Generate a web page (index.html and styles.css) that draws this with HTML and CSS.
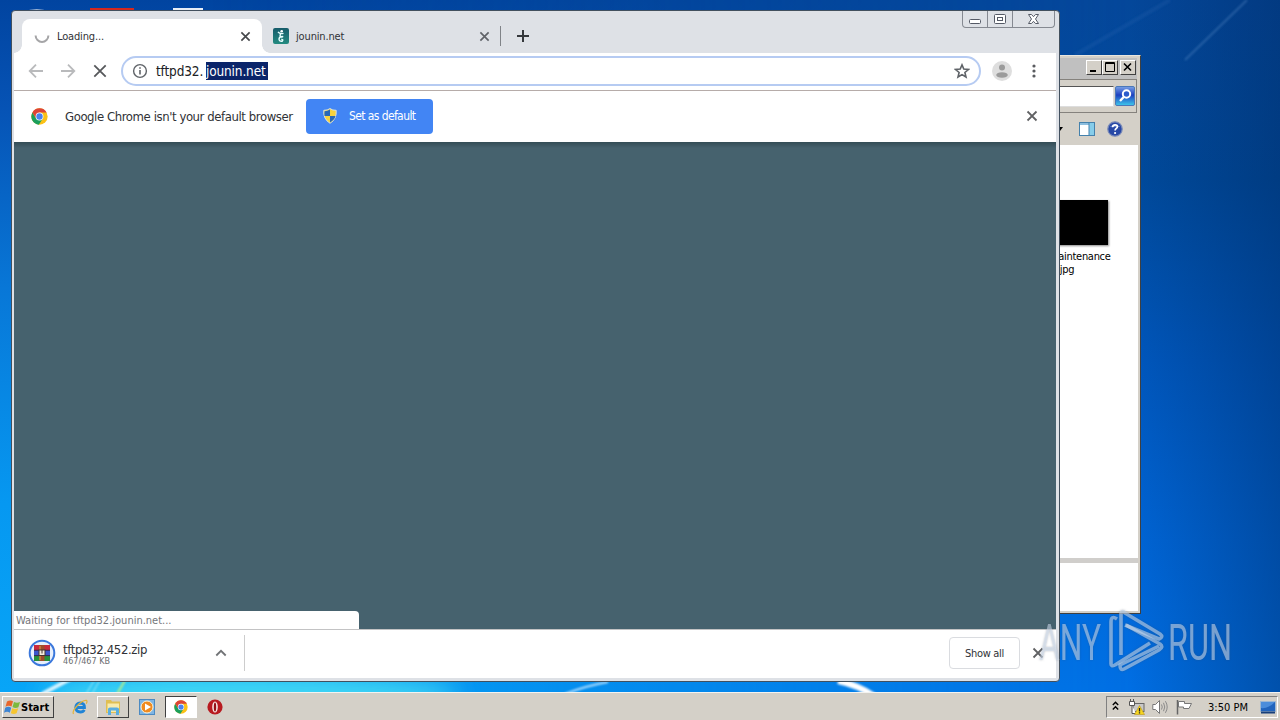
FILE: index.html
```html
<!DOCTYPE html>
<html lang="en">
  <head>
    <meta charset="UTF-8" />
    <meta name="viewport" content="width=device-width, initial-scale=1.0" />
    <title>Desktop</title>
    <link rel="stylesheet" href="styles.css">
  </head>
  <body>
    <svg width="0" height="0" class="defs">
      <symbol id="chrome" viewBox="0 0 48 48">
        <circle cx="24" cy="24" r="23" fill="#fbc116" />
        <path d="M4 12.5A23 23 0 0 0 22 47L33.5 29.5 24 24 14.5 29.5Z" fill="#1a9f5c" />
        <path d="M24 13H44.2A23 23 0 0 0 4 12.4L14.5 29.5Z" fill="#dc4437" />
        <circle cx="24" cy="24" r="11" fill="#fff" />
        <circle cx="24" cy="24" r="9" fill="#4a82ee" />
      </symbol>
      <symbol id="cross" viewBox="0 0 12 12">
        <path d="M1.5 1.5 10.5 10.5M10.5 1.5 1.5 10.5" fill="none" stroke="currentColor" stroke-width="1.8" />
      </symbol>
    </svg>

    <div class="desktop">
      <svg class="wallpaper" width="1280" height="720" viewBox="0 0 1280 720">
        <defs>
          <filter id="soft"><feGaussianBlur stdDeviation="1.1" /></filter>
          <filter id="haze" y="-2" height="5"><feGaussianBlur stdDeviation="12" /></filter>
        </defs>
        <ellipse cx="250" cy="695" rx="210" ry="22" fill="#4be0f4" opacity=".85" filter="url(#haze)" />
        <g filter="url(#soft)" fill="none">
          <path d="M42 694 72 678" stroke="#d5f3ff" stroke-width="4" />
          <path d="M86 694 97 676M92 694 101 678" stroke="#a8ecf5" />
          <path d="M117 694 127 677" stroke="#b9ef87" stroke-width="2" />
          <path d="M565 694Q585 686 608 682" stroke="#b5e0ff" stroke-width="2" />
          <path d="M838 681Q858 685 874 696" stroke="#fff" stroke-width="6" />
          <path d="M1185 60 1247 0" stroke="#6b9bd0" stroke-width="2" opacity=".35" />
          <path d="M1075 55 1170 0" stroke="#5c8fcc" stroke-width="4" opacity=".12" />
        </g>
        <path d="M23 12Q37 6 50 12Z" fill="#9bb2d3" />
        <rect x="90" y="8" width="44" height="5" fill="#d5281e" />
        <rect x="173" y="8" width="30" height="5" fill="#e9eef6" />
      </svg>

      <!-- Explorer window, behind the browser -->
      <div class="explorer">
        <div class="exp-title">
          <div class="exp-btn"><svg width="14" height="13"><path d="M3 10H9" stroke="#000" stroke-width="2" /></svg></div>
          <div class="exp-btn"><svg width="14" height="13"><path d="M2.5 1.5H11.5V10.5H2.5ZM2 2.5H12" fill="none" stroke="#000" /></svg></div>
          <div class="exp-btn exp-close"><svg width="14" height="13"><path d="M3 2.5 10 9.5M10 2.5 3 9.5" stroke="#000" stroke-width="1.6" /></svg></div>
        </div>
        <div class="exp-address">
          <div class="exp-input"></div>
          <svg class="exp-search" width="20" height="20" viewBox="0 0 20 20">
            <defs>
              <linearGradient id="sg" x2="0" y2="1"><stop offset="0" stop-color="#7aa2e6" /><stop offset=".45" stop-color="#1d3fc0" /><stop offset="1" stop-color="#3ec9ec" /></linearGradient>
            </defs>
            <rect x=".5" y=".5" width="19" height="19" rx="1.5" fill="url(#sg)" stroke="#4b78b8" />
            <circle cx="11.5" cy="8" r="3.7" fill="#2c5ccc" stroke="#fff" stroke-width="2" />
            <path d="M8.7 11 5 15" stroke="#fff" stroke-width="2.4" />
          </svg>
        </div>
        <div class="exp-tools">
          <svg width="6" height="5"><path d="M0 0H6L3 4Z" /></svg>
          <svg width="16" height="14" viewBox="0 0 16 14">
            <rect x=".5" y=".5" width="15" height="13" fill="#fff" stroke="#4581ac" />
            <path d="M1 2H10" stroke="#8dbede" stroke-width="2" />
            <rect x="10" y="1" width="5" height="12" fill="#86cdea" />
            <path d="M10 1V13" stroke="#4581ac" />
          </svg>
          <svg width="16" height="16" viewBox="0 0 16 16">
            <circle cx="8" cy="8" r="7.2" fill="#2748a6" stroke="#7889b8" stroke-width="1.2" />
            <path d="M2.5 6Q8 1 13.5 6Z" fill="#7e9bdc" opacity=".7" />
            <path d="M5.6 6.2C5.8 3 10.5 3.1 10.4 5.8 10.3 7.5 8.1 7.5 8.1 9.6" fill="none" stroke="#fff" stroke-width="1.7" />
            <circle cx="8.1" cy="12" r="1.1" fill="#fff" />
          </svg>
        </div>
        <div class="exp-files">
          <div class="thumb"></div>
          <div class="file-name">maintenance<div class="file-ext">.jpg</div></div>
        </div>
        <div class="exp-details"></div>
      </div>

      <!-- Browser window -->
      <div class="browser">
        <div class="tabstrip">
          <div class="tab active">
            <svg width="16" height="16"><path d="M1.6 7.5A6.4 6.4 0 0 0 14.4 7.5" fill="none" stroke="#a5a5a7" stroke-width="2" /></svg>
            <span class="tab-title">Loading...</span>
            <svg class="tab-close" width="11" height="11"><use href="#cross" /></svg>
          </div>
          <div class="tab">
            <svg width="16" height="16" viewBox="0 0 16 16">
              <defs><linearGradient id="jg" x2="0" y2="1"><stop offset="0" stop-color="#165b6a" /><stop offset="1" stop-color="#238b81" /></linearGradient></defs>
              <rect width="16" height="16" rx="2" fill="url(#jg)" />
              <circle cx="8.7" cy="3.3" r="1.3" fill="#fff" />
              <path d="M5 3.8Q6.5 6.2 10.5 5.4M7.5 6Q6 8.8 9.5 9.2M10.3 8.6Q6.3 8.2 6 11 6.3 13.8 9.2 13.2 10.8 11.6 8.3 11.2" fill="none" stroke="#e8ffff" stroke-width="1.4" />
            </svg>
            <span class="tab-title">jounin.net</span>
            <svg class="tab-close dim" width="11" height="11"><use href="#cross" /></svg>
          </div>
          <div class="tab-sep"></div>
          <svg class="new-tab" width="12" height="12"><path d="M6 0V12M0 6H12" stroke="#35383c" stroke-width="2" /></svg>
          <div class="caption">
            <div class="cap"><svg width="24" height="16"><rect x="6.5" y="8.5" width="11" height="4" rx="1" fill="#fff" stroke="#555a66" /></svg></div>
            <div class="cap"><svg width="24" height="16"><rect x="6.5" y="3.5" width="11" height="9" rx="1" fill="#fff" stroke="#555a66" /><rect x="9.5" y="6.5" width="5" height="3" fill="#fff" stroke="#555a66" /></svg></div>
            <div class="cap wide"><svg width="41" height="16"><path d="M15.5 3.5H18.5L20.5 5.7 22.5 3.5H25.5L22.5 8 25.5 12.5H22.5L20.5 10.3 18.5 12.5H15.5L18.5 8Z" fill="#fff" stroke="#555a66" /></svg></div>
          </div>
        </div>

        <div class="toolbar">
          <svg class="nav" width="16" height="16"><path d="M15 8H2M8 1.7 1.7 8 8 14.3" fill="none" stroke="#b9babc" stroke-width="1.8" /></svg>
          <svg class="nav" width="16" height="16"><path d="M1 8H14M8 1.7 14.3 8 8 14.3" fill="none" stroke="#b9babc" stroke-width="1.8" /></svg>
          <svg class="nav stop" width="14" height="14" viewBox="0 0 14 14"><path d="M1.3 1.3 12.7 12.7M12.7 1.3 1.3 12.7" stroke="#56585b" stroke-width="1.8" /></svg>
          <div class="omnibox">
            <svg width="16" height="16" viewBox="0 0 16 16"><circle cx="8" cy="8" r="6.4" fill="none" stroke="#5f6368" stroke-width="1.4" /><path d="M8 7V11.6M8 4.2V5.8" stroke="#5f6368" stroke-width="1.6" /></svg>
            <div class="url"><span class="host">tftpd32.</span><span class="selected">jounin.net</span></div>
            <svg class="star" width="16" height="16" viewBox="0 0 16 16"><path d="M8 1.9 9.8 6.1 14.4 6.5 10.9 9.5 12 14 8 11.6 4 14 5.1 9.5 1.6 6.5 6.2 6.1Z" fill="none" stroke="#5f6368" stroke-width="1.6" /></svg>
          </div>
          <svg class="avatar" width="20" height="20"><circle cx="10" cy="10" r="10" fill="#dedede" /><circle cx="10" cy="6.5" r="3" fill="#9b9b9b" /><ellipse cx="10" cy="14" rx="5.8" ry="2.8" fill="#9b9b9b" /></svg>
          <svg width="4" height="14" fill="#5a5c60"><circle cx="2" cy="2" r="1.6" /><circle cx="2" cy="7" r="1.6" /><circle cx="2" cy="12" r="1.6" /></svg>
        </div>

        <div class="infobar">
          <svg width="17" height="17"><use href="#chrome" /></svg>
          <span class="info-text">Google Chrome isn't your default browser</span>
          <button class="default-btn">
            <svg width="14" height="16" viewBox="0 0 14 16">
              <path d="M7 .6Q9.5 2.5 13.2 2.3 14 11 7 15.3 0 11 .8 2.3 4.5 2.5 7 .6Z" fill="#f7d23c" stroke="#d9e2df" />
              <path d="M7 1.6V8H1.5Q1.2 5 1.6 3.2 4.5 3.2 7 1.6ZM7 8H12.5Q11.5 12 7 14.4Z" fill="#2867b6" />
            </svg>
            <span>Set as default</span>
          </button>
          <svg class="info-close" width="12" height="12"><use href="#cross" /></svg>
        </div>

        <div class="page">
          <div class="status">Waiting for tftpd32.jounin.net...</div>
        </div>

        <div class="downloads">
          <svg width="28" height="28" viewBox="0 0 28 28">
            <circle cx="14" cy="14" r="12.3" fill="#e8f0fc" stroke="#3b78dc" stroke-width="2" />
            <rect x="6" y="6" width="16" height="5.3" fill="#c9293c" />
            <rect x="6" y="11.3" width="16" height="5.3" fill="#3a56cd" />
            <rect x="6" y="16.6" width="16" height="5.4" fill="#26913b" />
            <path d="M6 11.3H22M6 16.6H22" stroke="#33214e" />
            <rect x="11.5" y="6" width="5" height="16" fill="#a04c2a" />
            <path d="M12 7V21" stroke="#dca13c" />
            <rect x="11" y="11" width="6" height="5.5" fill="#f4eddb" stroke="#47352e" />
            <path d="M14 11V14.5" stroke="#47352e" />
          </svg>
          <div class="dl-info">
            <div class="dl-name">tftpd32.452.zip</div>
            <div class="dl-size">467/467 KB</div>
          </div>
          <svg class="dl-arrow" width="12" height="8"><path d="M1.3 6.5 6 1.8 10.7 6.5" fill="none" stroke="#717376" stroke-width="1.8" /></svg>
          <div class="dl-sep"></div>
          <button class="show-all">Show all</button>
          <svg class="dl-close" width="12" height="12"><use href="#cross" /></svg>
        </div>
      </div>

      <svg class="watermark" width="210" height="80" viewBox="0 0 210 80">
        <g fill="#d3e0f0" fill-opacity=".55">
          <text x="1" y="59.5" textLength="62" lengthAdjust="spacingAndGlyphs">ANY</text>
          <text x="130" y="59.5" textLength="64" lengthAdjust="spacingAndGlyphs">RUN</text>
        </g>
        <g fill="none" stroke="#c0d5ef" stroke-opacity=".6" stroke-width="3.6" stroke-linejoin="round">
          <path d="M79 19Q73 15 73 22V64Q73 67 77 65L112 43" />
          <path d="M83 55V13Q84 10 87 13L122 34Q126 37 121 39L87 25" />
          <path d="M88 25 122 44Q126 47 121 50L86 69Q82 71 82 65L121 46" />
        </g>
      </svg>

      <div class="taskbar">
        <div class="start">
          <svg width="17" height="16" viewBox="0 0 17 16">
            <path d="M3 2.5Q6 .5 9 2.3L7.5 7.6Q4.5 6 1.5 7.8Z" fill="#e8662b" />
            <path d="M10 3Q13 4.6 16 3L14.4 8.2Q11.5 9.7 8.5 8Z" fill="#7cb93e" />
            <path d="M1.2 8.8Q4.3 7 7.2 8.7L5.8 13.7Q3 12 0 13.8Z" fill="#3d85d3" />
            <path d="M8.2 9.2Q11 10.8 14.2 9.3L12.6 14.2Q9.8 15.8 6.8 14.2Z" fill="#f6c52e" />
          </svg>
          <span>Start</span>
        </div>
        <div class="task ie">
          <svg width="16" height="16" viewBox="0 0 16 16">
            <path d="M3.5 8.5H12.5Q12.7 4.2 8.3 4 4 4.2 3.7 8.7 4 13 8.4 13 11.2 13 12.3 10.8" fill="none" stroke="#2084d6" stroke-width="2.8" />
            <path d="M1.5 15Q0 12.5 4.5 7.5 10.5 1 14.4 1.4 15.7 2 14.3 4.8" fill="none" stroke="#e2b33c" stroke-width="1.2" />
          </svg>
        </div>
        <div class="task raised">
          <svg width="16" height="16" viewBox="0 0 16 16">
            <path d="M1 1H6L7 2.5H15V14H1Z" fill="#e0bf52" />
            <path d="M2.5 4.5H14V13H2.5Z" fill="#f8ebad" />
            <path d="M3 16V10Q3 8.5 5 8.5H12Q14 8.5 14 10V16H11V11.5H6V16Z" fill="#5aaee0" />
          </svg>
        </div>
        <div class="task">
          <svg width="16" height="16" viewBox="0 0 16 16">
            <rect x=".5" y=".5" width="15" height="15" fill="#7eb5e4" stroke="#4c8ac2" />
            <circle cx="8" cy="8" r="6" fill="#f08b20" stroke="#fff3d6" />
            <path d="M6 4.5 12 8 6 11.5Z" fill="#fff" />
          </svg>
        </div>
        <div class="task pressed"><svg width="14" height="14"><use href="#chrome" /></svg></div>
        <div class="task opera">
          <svg width="16" height="16"><circle cx="8" cy="8" r="7.6" fill="#b81a20" /><ellipse cx="8" cy="8" rx="2.8" ry="5.6" fill="#f8e9e6" /><ellipse cx="8" cy="8" rx="1.2" ry="4.6" fill="#951015" /></svg>
        </div>
        <div class="tray">
          <svg class="chevrons" width="7" height="10"><path d="M.8 4 3.5 1.3 6.2 4M.8 8.5 3.5 5.8 6.2 8.5" fill="none" stroke="#000" stroke-width="1.4" /></svg>
          <svg class="net" width="17" height="16" viewBox="0 0 17 16">
            <rect x="5" y="4.5" width="11" height="8" fill="#c8c8c8" stroke="#666" />
            <path d="M1.5 2.5H6.5V6.5H1.5ZM2.5 0V2.5M5.5 0V2.5M4 6.5V14.5H8" fill="#fff" stroke="#555" />
            <path d="M11.5 6.5 16.5 15.5H6.5Z" fill="#f6d51f" stroke="#b9951a" stroke-width=".6" />
            <path d="M11.5 9V12.5M11.5 13.3V14.6" stroke="#222" stroke-width="1.3" />
          </svg>
          <svg class="sound" width="17" height="16" viewBox="0 0 17 16">
            <path d="M.8 5.5H3.5L7.5 1.5V14.5L3.5 10.5H.8Z" fill="#fff" stroke="#777" />
            <path d="M9.5 5.5Q11 8 9.5 10.5M11.5 3.8Q14 8 11.5 12.2M13.4 2.2Q17 8 13.4 13.8" fill="none" stroke="#8b8b8b" />
          </svg>
          <svg class="flag" width="17" height="16" viewBox="0 0 17 16">
            <path d="M1.5 1V15.5" stroke="#666" stroke-width="1.5" />
            <path d="M2.5 2.5H8.5V4.5H15.5L13 9.5H7.5V8H2.5Z" fill="#fff" stroke="#777" />
          </svg>
          <span class="clock">3:50 PM</span>
          <svg width="16" height="13" viewBox="0 0 16 13">
            <rect x=".5" y=".5" width="15" height="10" fill="#2164bd" stroke="#9db7d2" />
            <path d="M1 7Q8 8 15 1V1H1Z" fill="#4b8ddb" />
            <path d="M1 11.5H15" stroke="#173e7a" stroke-width="2" />
          </svg>
        </div>
      </div>
    </div>
  </body>
</html>
```
FILE: styles.css
```css
* {
  box-sizing: border-box;
}

body {
  margin: 0;
  overflow: hidden;
  font-family: "DejaVu Sans Condensed", "DejaVu Sans", sans-serif;
  font-size: 11px;
  color: #303236;
}

svg {
  display: block;
  flex-shrink: 0;
}

button {
  font-family: inherit;
  padding: 0;
}

.defs {
  position: absolute;
}

.desktop {
  position: relative;
  width: 1280px;
  height: 720px;
  display: flex;
  flex-direction: column;
  justify-content: flex-end;
  background: linear-gradient(to bottom, #0144a0 0%, #0653b5 15%, #0877d7 40%, #0698f1 70%, #08a7f8 100%);
}

/* darker right half of the wallpaper */
.desktop::before {
  content: "";
  position: absolute;
  inset: 0;
  background:
    linear-gradient(to right, transparent 1130px, rgba(0, 40, 95, 0.42) 1280px),
    linear-gradient(to bottom, #04479a 0%, #004a9c 25%, #0057bd 50%, #0065d6 75%, #0070e6 100%);
  -webkit-mask-image: linear-gradient(to right, transparent 200px, #000 1130px);
  mask-image: linear-gradient(to right, transparent 200px, #000 1130px);
}

.wallpaper {
  position: absolute;
  left: 0;
  top: 0;
}

/* Explorer */
.explorer {
  position: absolute;
  left: 640px;
  top: 55px;
  width: 501px;
  height: 559px;
  display: flex;
  flex-direction: column;
  padding: 1px 2px 2px 1px;
  background: #d4d0c8;
  border: 1px solid #e8e6e0;
  border-right-color: #404040;
  border-bottom-color: #404040;
}

.exp-title {
  height: 21px;
  margin: 1px 1px 0;
  padding: 2px 1px 0;
  display: flex;
  justify-content: flex-end;
  background: #c0c0c0;
}

.exp-btn {
  width: 16px;
  height: 15px;
  background: #d4d0c8;
  border: 1px solid #fff;
  border-right-color: #404040;
  border-bottom-color: #404040;
}

.exp-close {
  margin-left: 2px;
}

.exp-address {
  height: 34px;
  margin-right: 1px;
  padding: 6px 1px 0 0;
  display: flex;
  gap: 1px;
  border: 1px solid #85827d;
}

.exp-input {
  flex: 1;
  height: 21px;
  background: #fff;
  border: 1px solid #555;
  border-right-color: #ddd;
  border-bottom-color: #ddd;
}

.exp-tools {
  height: 32px;
  padding-right: 15px;
  display: flex;
  align-items: center;
  justify-content: flex-end;
  gap: 12px;
}

.exp-tools svg:first-child {
  margin-right: 4px;
}

.exp-files {
  flex: 1;
  padding: 55px 22px 0 0;
  background: #fff;
  display: flex;
  flex-direction: column;
  align-items: flex-end;
}

.thumb {
  width: 80px;
  height: 45px;
  margin-right: 8px;
  background: #000;
  box-shadow: 1px 1px 2px #888;
}

.file-name {
  width: 67px;
  margin-top: 5px;
  line-height: 13px;
  letter-spacing: -0.3px;
  color: #000;
}

.file-ext {
  padding-left: 8px;
}

.exp-details {
  height: 53px;
  border-top: 5px solid #d0cecb;
  background: #fff;
}

/* Browser */
.browser {
  position: absolute;
  left: 11px;
  top: 10px;
  width: 1049px;
  height: 672px;
  display: flex;
  flex-direction: column;
  padding: 0 3px 3px 2px;
  background: #dee1e6;
  border: 1px solid #42505e;
  border-radius: 4px;
}

.tabstrip {
  height: 42px;
  padding: 8px 0 0 8px;
  display: flex;
  align-items: flex-start;
}

.tab {
  width: 239px;
  height: 34px;
  padding: 0 11px;
  display: flex;
  align-items: center;
  gap: 7px;
}

.tab.active {
  width: 240px;
  padding: 0 11px 0 12px;
  background: #fff;
  border-radius: 8px 8px 0 0;
  position: relative;
}

.tab.active::before,
.tab.active::after {
  content: "";
  position: absolute;
  bottom: 0;
  width: 8px;
  height: 8px;
}

.tab.active::before {
  left: -8px;
  background: radial-gradient(circle at 0 0, transparent 7.5px, #fff 8px);
}

.tab.active::after {
  right: -8px;
  background: radial-gradient(circle at 100% 0, transparent 7.5px, #fff 8px);
}

.tab-title {
  flex: 1;
  letter-spacing: -0.15px;
}

.tab-close {
  color: #46484b;
}

.tab-close.dim {
  color: #606368;
}

.tab-sep {
  width: 1px;
  height: 20px;
  margin: 7px 16px 0 -1px;
  background: #808388;
}

.new-tab {
  margin-top: 11px;
}

.caption {
  display: flex;
  margin: -8px 1px 0 auto;
  height: 17px;
  border: 1px solid #858991;
  border-top: none;
  border-radius: 0 0 4px 4px;
}

.cap + .cap {
  border-left: 1px solid #858991;
}

.toolbar {
  height: 38px;
  padding: 0 20px 1px 14px;
  display: flex;
  align-items: center;
  background: #fff;
  border-bottom: 1px solid #b6aca9;
}

.nav {
  margin-right: 16px;
}

.nav.stop {
  margin: 0 14px 0 1px;
}

.omnibox {
  width: 860px;
  height: 30px;
  padding: 0 9px;
  display: flex;
  align-items: center;
  border: 2px solid #b6cbf2;
  border-radius: 15px;
  color: #202124;
}

.url {
  flex: 1;
  display: flex;
  margin-left: 8px;
  font-size: 14px;
  line-height: 18px;
}

.host {
  width: 50px;
  letter-spacing: -0.15px;
}

.selected {
  width: 62px;
  background: #0a246a;
  color: #fff;
  letter-spacing: -0.15px;
}

.host,
.selected {
  font-size: 13.5px;
}

.avatar {
  margin: 0 20px 0 11px;
}

.infobar {
  height: 51px;
  padding: 0 18px 1px 17px;
  display: flex;
  align-items: center;
  background: #fff;
}

.info-text {
  width: 228px;
  margin: 0 13px 0 17px;
  font-size: 13px;
  letter-spacing: -0.42px;
  white-space: nowrap;
}

.default-btn {
  width: 127px;
  height: 35px;
  padding-left: 17px;
  display: flex;
  align-items: center;
  gap: 12px;
  border: none;
  border-radius: 4px;
  background: #4285f4;
  color: #fff;
  font-size: 12px;
  letter-spacing: -0.6px;
}

.info-close {
  margin-left: auto;
  color: #606163;
}

.page {
  flex: 1;
  display: flex;
  align-items: flex-end;
  background: linear-gradient(#344d56, #46626e 6px);
}

.status {
  width: 345px;
  height: 18px;
  padding-left: 2px;
  background: #fff;
  border-radius: 0 4px 0 0;
  color: #74767a;
  line-height: 19px;
}

.downloads {
  height: 49px;
  padding: 0 12px 2px 14px;
  display: flex;
  align-items: center;
  background: #fff;
  border-top: 1px solid #c3c3c4;
}

.dl-info {
  width: 152px;
  margin: 2px 0 0 7px;
}

.dl-name {
  font-size: 13px;
  line-height: 13px;
  letter-spacing: -0.35px;
}

.dl-size {
  color: #6b6d70;
  font-size: 9px;
  line-height: 10px;
}

.dl-sep {
  width: 1px;
  height: 36px;
  margin-left: 17px;
  background: #cdcdcd;
}

.show-all {
  width: 71px;
  height: 32px;
  margin: 0 12px 0 auto;
  background: #fff;
  border: 1px solid #dadce0;
  border-radius: 4px;
  color: #303236;
  font-size: 11px;
  letter-spacing: -0.3px;
}

.dl-close {
  color: #606163;
}

.watermark {
  position: absolute;
  left: 1038px;
  top: 600px;
  font-family: Roboto, sans-serif;
  font-size: 50px;
  font-weight: 400;
  filter: drop-shadow(0 0 1px rgba(60, 70, 85, 0.5));
}

/* Taskbar */
.taskbar {
  position: relative;
  height: 28px;
  padding: 3px 2px 2px;
  display: flex;
  align-items: flex-start;
  background: #d4d0c8;
  border-top: 1px solid #f4f3f0;
}

.start {
  width: 52px;
  height: 22px;
  padding-left: 1px;
  display: flex;
  align-items: center;
  margin-right: 10px;
  border: 1px solid #fff;
  border-right-color: #404040;
  border-bottom-color: #404040;
  color: #000;
  font-weight: bold;
}

.task {
  width: 32px;
  height: 22px;
  margin-right: 2px;
  display: flex;
  align-items: center;
  justify-content: center;
}

.task.raised {
  margin-left: -1px;
  border: 1px solid #fff;
  border-right-color: #404040;
  border-bottom-color: #404040;
}

.task.pressed {
  background: #fff;
  border: 1px solid #404040;
  border-right-color: #fff;
  border-bottom-color: #fff;
}

.tray {
  width: 172px;
  height: 22px;
  margin-left: auto;
  padding: 0 1px 0 5px;
  display: flex;
  align-items: center;
  border: 1px solid #808080;
  border-right-color: #fff;
  border-bottom-color: #fff;
  color: #000;
}

.chevrons {
  margin-bottom: 2px;
}

.net {
  margin-left: 9px;
}

.sound {
  margin-left: 7px;
}

.flag {
  margin-left: 7px;
}

.clock {
  margin: 0 auto;
  padding-left: 3px;
}
```
